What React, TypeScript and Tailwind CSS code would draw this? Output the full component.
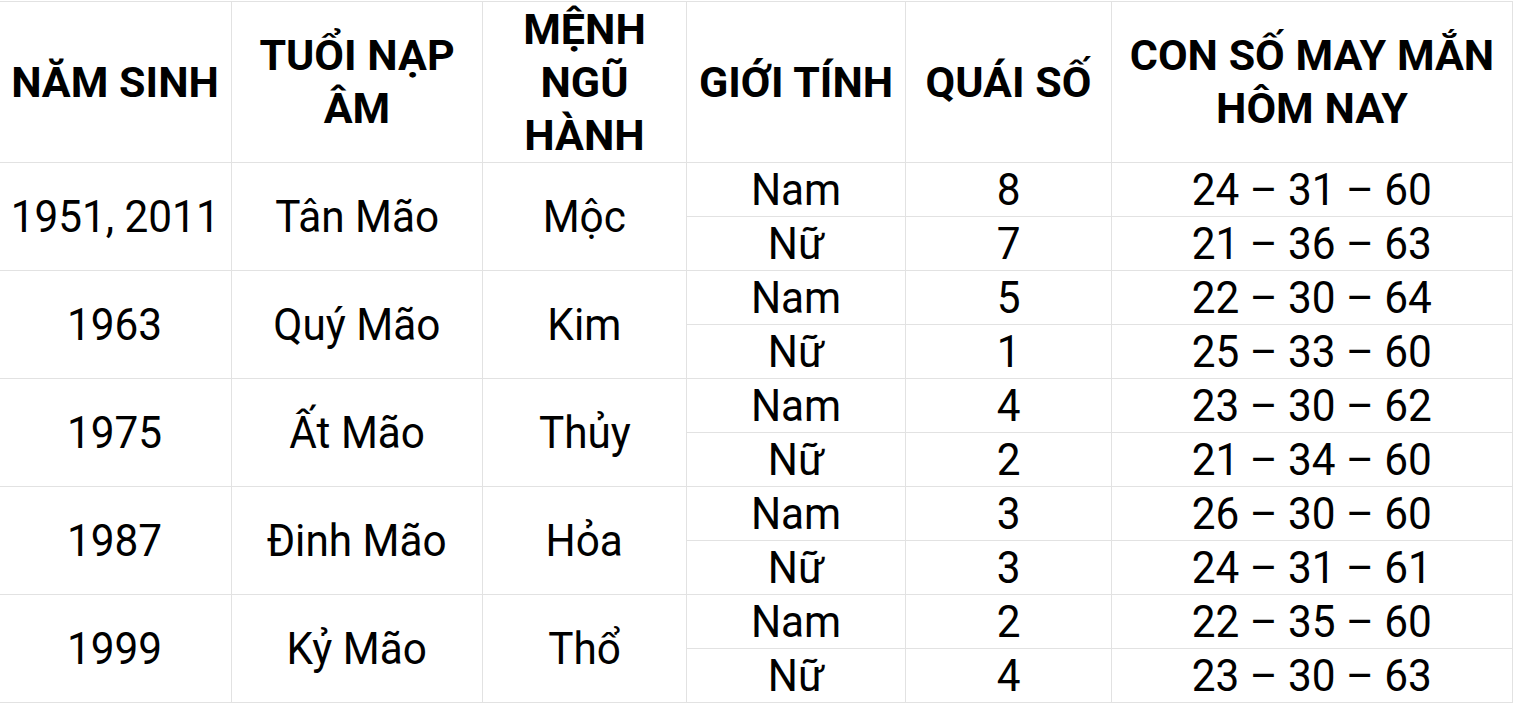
const rows = [
  { year: "1951, 2011", napAm: "Tân Mão", menh: "Mộc", nam: ["8", "24 – 31 – 60"], nu: ["7", "21 – 36 – 63"] },
  { year: "1963", napAm: "Quý Mão", menh: "Kim", nam: ["5", "22 – 30 – 64"], nu: ["1", "25 – 33 – 60"] },
  { year: "1975", napAm: "Ất Mão", menh: "Thủy", nam: ["4", "23 – 30 – 62"], nu: ["2", "21 – 34 – 60"] },
  { year: "1987", napAm: "Đinh Mão", menh: "Hỏa", nam: ["3", "26 – 30 – 60"], nu: ["3", "24 – 31 – 61"] },
  { year: "1999", napAm: "Kỷ Mão", menh: "Thổ", nam: ["2", "22 – 35 – 60"], nu: ["4", "23 – 30 – 63"] },
];

const headers = ["NĂM SINH", "TUỔI NẠP ÂM", "MỆNH NGŨ HÀNH", "GIỚI TÍNH", "QUÁI SỐ", "CON SỐ MAY MẮN HÔM NAY"];

const Txt = ({ children }: { children: React.ReactNode }) => (
  <span className="inline-block scale-x-94 whitespace-nowrap">{children}</span>
);

const cell = "border border-[#e2e2e2] p-0 text-center align-middle";

export default function App() {
  return (
    <div className="min-h-screen bg-white pt-px text-black" style={{ fontFamily: "Roboto, 'Noto Sans', sans-serif" }}>
      <table className="w-[1514px] -ml-[2px] table-fixed border-collapse">
        <colgroup>
          <col className="w-[233px]" />
          <col className="w-[251px]" />
          <col className="w-[204px]" />
          <col className="w-[219px]" />
          <col className="w-[206px]" />
          <col className="w-[401px]" />
        </colgroup>
        <thead>
          <tr className="h-[161px]">
            {headers.map((h, i) => (
              <th
                key={h}
                className={`${cell} px-2 text-[43px] font-bold leading-[53px] ${i === 2 ? "px-10" : ""}`}
              >
                {h}
              </th>
            ))}
          </tr>
        </thead>
        <tbody className="text-[45px] leading-[52px]">
          {rows.map((r) => (
            <>
              <tr key={r.year + "a"} className="h-[54px]">
                <td rowSpan={2} className={cell}><Txt>{r.year}</Txt></td>
                <td rowSpan={2} className={cell}><Txt>{r.napAm}</Txt></td>
                <td rowSpan={2} className={cell}><Txt>{r.menh}</Txt></td>
                <td className={cell}><Txt>Nam</Txt></td>
                <td className={cell}><Txt>{r.nam[0]}</Txt></td>
                <td className={cell}><Txt>{r.nam[1]}</Txt></td>
              </tr>
              <tr key={r.year + "b"} className="h-[54px]">
                <td className={cell}><Txt>Nữ</Txt></td>
                <td className={cell}><Txt>{r.nu[0]}</Txt></td>
                <td className={cell}><Txt>{r.nu[1]}</Txt></td>
              </tr>
            </>
          ))}
        </tbody>
      </table>
    </div>
  );
}
